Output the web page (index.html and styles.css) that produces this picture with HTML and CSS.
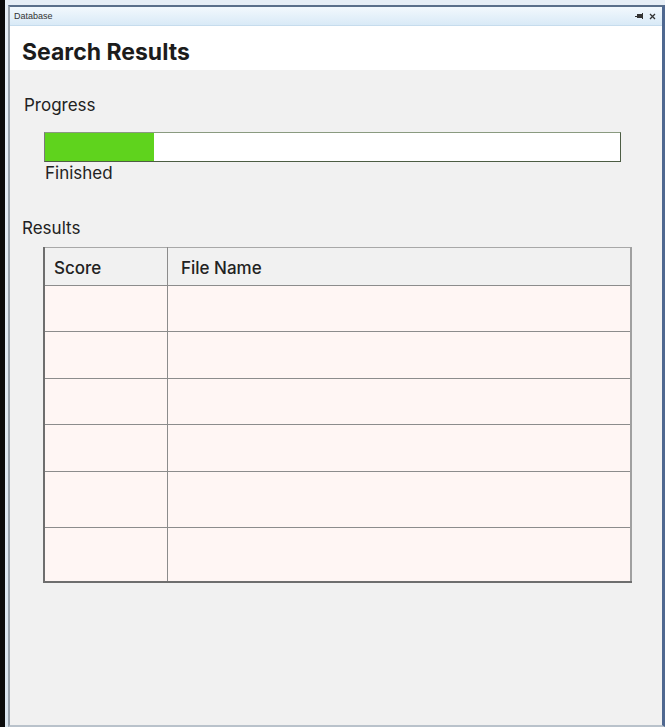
FILE: index.html
```html
<!DOCTYPE html>
<html>
<head>
<meta charset="utf-8">
<link rel="stylesheet" href="styles.css">
</head>
<body>
<div class="app">
  <div class="window">
    <div class="titlebar">
      <span class="title">Database</span>
      <span class="controls">
        <svg width="9" height="7" viewBox="0 0 9 7"><rect x="2" y="1" width="5" height="4" fill="#333"/><rect x="0" y="3" width="2" height="1" fill="#333"/><rect x="7" y="0" width="1" height="6" fill="#333"/></svg>
        <svg width="7" height="7" viewBox="0 0 7 7"><path d="M1 1L6 6M6 1L1 6" stroke="#333" stroke-width="1.3"/></svg>
      </span>
    </div>
    <div class="header"><h1>Search Results</h1></div>
    <div class="content">
      <div class="label progress-label">Progress</div>
      <div class="progress"><div class="progress-fill" style="width:19%"></div></div>
      <div class="status">Finished</div>
      <div class="label results-label">Results</div>
      <table class="results">
        <thead>
          <tr><th class="col-score">Score</th><th>File Name</th></tr>
        </thead>
        <tbody>
          <tr class="r1"><td></td><td></td></tr>
          <tr class="r2"><td></td><td></td></tr>
          <tr class="r3"><td></td><td></td></tr>
          <tr class="r4"><td></td><td></td></tr>
          <tr class="r5"><td></td><td></td></tr>
          <tr class="r6"><td></td><td></td></tr>
        </tbody>
      </table>
    </div>
  </div>
</div>
</body>
</html>
```
FILE: styles.css
```css
html, body {
  margin: 0;
  padding: 0;
}
body {
  width: 665px;
  height: 727px;
  overflow: hidden;
  background: #d9e4ef;
  font-family: Inter, "Noto Sans", sans-serif;
  color: #222;
}
.app {
  box-sizing: border-box;
  height: 727px;
  padding-top: 5px;
  border-left: 5px solid #0b0b0b;
  background: linear-gradient(#e6eef6, #dbe6f0);
}
.window {
  box-sizing: border-box;
  height: 722px;
  margin-left: 3px;
  border-top: 2px solid #5a6f8a;
  border-left: 2px solid #9aa4ae;
  border-right: 3px solid #4f6890;
  border-bottom: 2px solid #b9c2cb;
  display: flex;
  flex-direction: column;
  background: #f1f1f1;
}
.titlebar {
  height: 18px;
  flex: none;
  display: flex;
  align-items: center;
  justify-content: space-between;
  padding: 0 6px 0 4px;
  background: linear-gradient(#f2f8fd, #d9eaf7);
  border-bottom: 1px solid #c6dced;
}
.title {
  font-family: "Liberation Sans", sans-serif;
  font-size: 9px;
  color: #333;
}
.controls {
  display: flex;
  gap: 5px;
  align-items: center;
}
.header {
  height: 44px;
  flex: none;
  box-sizing: border-box;
  background: #fff;
  padding: 7px 0 0 12px;
  display: flex;
  align-items: center;
}
h1 {
  margin: 0;
  font-size: 23px;
  font-weight: 700;
  color: #1c1c1c;
  letter-spacing: 0;
}
.content {
  flex: 1;
  background: #f1f1f1;
}
.label {
  font-size: 17px;
  line-height: 20px;
  color: #222;
}
.progress-label {
  margin: 25px 0 0 14px;
}
.progress {
  box-sizing: border-box;
  margin: 17px 0 0 34px;
  width: 577px;
  height: 30px;
  background: #fff;
  border: 1px solid #4d5d44;
  border-top-color: #8a9a80;
  border-left-color: #7a7a7a;
}
.progress-fill {
  height: 100%;
  background: #5fd31d;
}
.status {
  font-size: 17px;
  line-height: 20px;
  margin: 1px 0 0 35px;
}
.results-label {
  margin: 35px 0 0 12px;
}
.results {
  margin: 9px 0 0 33px;
  width: 589px;
  border-collapse: collapse;
  border: 2px solid #6e6e6e;
  border-top: 1px solid #a8a8a8;
  border-right: 2px solid #a0a0a0;
}
.results th {
  height: 35px;
  text-align: left;
  font-weight: 500;
  font-size: 17px;
  background: #f1f1f1;
  padding: 2px 0 0 9px;
  border-bottom: 1px solid #8c8c8c;
  border-right: 1px solid #8c8c8c;
}
.results th + th {
  padding-left: 13px;
}
.col-score {
  width: 113px;
}
.results td {
  background: #fff6f4;
  border-bottom: 1px solid #8c8c8c;
  border-right: 1px solid #8c8c8c;
  padding: 0;
}
.r1 td { height: 45px; }
.r2 td { height: 46px; }
.r3 td { height: 45px; }
.r4 td { height: 46px; }
.r5 td { height: 55px; }
.r6 td { height: 53px; }
```
